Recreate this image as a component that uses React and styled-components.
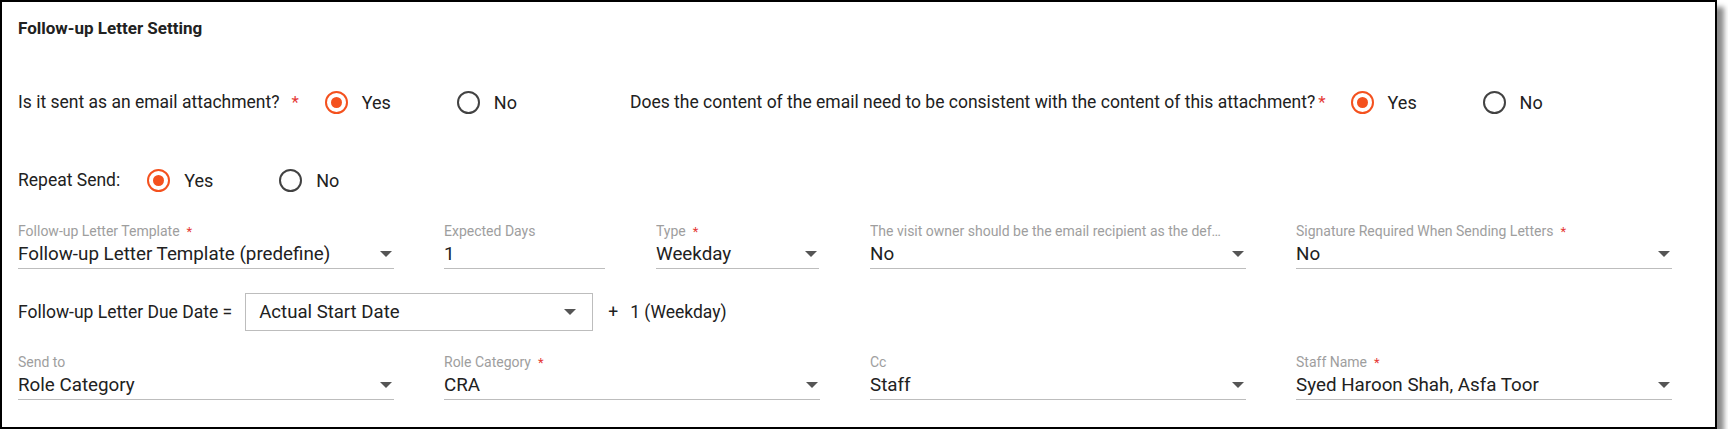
import React from "react";
import styled, { createGlobalStyle } from "styled-components";

const GlobalStyle = createGlobalStyle`
  body {
    margin: 0;
    background: #ffffff;
    font-family: Roboto, "Liberation Sans", sans-serif;
    color: #212121;
  }
`;

const Panel = styled.div`
  width: 1717px;
  height: 429px;
  box-sizing: border-box;
  border: 2px solid #000;
  box-shadow: 7px 7px 5px rgba(0, 0, 0, 0.45);
  padding: 15px 0 0 16px;
  display: flex;
  flex-direction: column;
`;

const Title = styled.h3`
  margin: 0;
  font-size: 17px;
  font-weight: 700;
  line-height: 22px;
  color: #212121;
`;

const RadioRow = styled.div`
  display: flex;
  align-items: center;
  height: 40px;
  margin-top: ${(p) => p.$top}px;
`;

const Question = styled.div`
  display: flex;
  align-items: center;
  width: ${(p) => (p.$width ? `${p.$width}px` : "auto")};
`;

const QuestionText = styled.span`
  font-size: 17.5px;
  color: #212121;
`;

const Star = styled.span`
  color: #e53935;
  margin-left: ${(p) => p.$gap || 4}px;
  font-size: ${(p) => p.$size || 17}px;
`;

const Options = styled.div`
  display: flex;
  align-items: center;
  margin-left: ${(p) => p.$gap}px;
`;

const Option = styled.label`
  display: flex;
  align-items: center;
  gap: 13px;
  width: 132px;
  font-size: 18px;
  color: #212121;
`;

const Circle = styled.span`
  width: 23px;
  height: 23px;
  box-sizing: border-box;
  border-radius: 50%;
  border: 2px solid ${(p) => (p.$checked ? "#f4511e" : "#424242")};
  display: flex;
  align-items: center;
  justify-content: center;
  margin: 1px;
  &::after {
    content: "";
    width: 11px;
    height: 11px;
    border-radius: 50%;
    background: ${(p) => (p.$checked ? "#f4511e" : "transparent")};
  }
`;

const FieldRow = styled.div`
  display: grid;
  grid-template-columns: repeat(4, 376px);
  column-gap: 50px;
  margin-top: ${(p) => p.$top}px;
`;

const Split = styled.div`
  display: grid;
  grid-template-columns: 161px 163px;
  column-gap: 51px;
`;

const Field = styled.div`
  display: flex;
  flex-direction: column;
  border-bottom: 1px solid #bdbdbd;
  min-width: 0;
`;

const FieldLabel = styled.div`
  font-size: 14px;
  line-height: 17px;
  color: #9e9e9e;
  white-space: nowrap;
  overflow: hidden;
  text-overflow: ellipsis;
  padding-right: 24px;
`;

const ValueLine = styled.div`
  display: flex;
  align-items: center;
  justify-content: space-between;
  height: 28px;
  font-size: 18.8px;
  color: #212121;
`;

const Caret = styled.span`
  width: 0;
  height: 0;
  border-left: 6px solid transparent;
  border-right: 6px solid transparent;
  border-top: 6px solid #555;
  margin-right: 2px;
`;

const DueRow = styled.div`
  display: flex;
  align-items: center;
  margin-top: 24px;
  font-size: 17.5px;
  color: #212121;
`;

const Box = styled.div`
  width: 348px;
  height: 38px;
  box-sizing: border-box;
  border: 1px solid #bdbdbd;
  margin-left: 13px;
  padding: 0 14px 0 13px;
  display: flex;
  align-items: center;
  justify-content: space-between;
  font-size: 18.6px;
`;

const Plus = styled.span`
  margin-left: 15px;
  margin-right: 12px;
`;

function Radios({ value, gap }) {
  return (
    <Options $gap={gap}>
      <Option>
        <Circle $checked={value === "Yes"} />
        Yes
      </Option>
      <Option>
        <Circle $checked={value === "No"} />
        No
      </Option>
    </Options>
  );
}

function Select({ label, value, required, caret = true }) {
  return (
    <Field>
      <FieldLabel>
        {label}
        {required && <Star $gap={7} $size={13}>*</Star>}
      </FieldLabel>
      <ValueLine>
        <span>{value}</span>
        {caret && <Caret />}
      </ValueLine>
    </Field>
  );
}

export default function App() {
  return (
    <>
      <GlobalStyle />
      <Panel>
        <Title>Follow-up Letter Setting</Title>

        <RadioRow $top={43}>
          <Question $width={612}>
            <QuestionText>Is it sent as an email attachment?</QuestionText>
            <Star $gap={12}>*</Star>
            <Radios value="Yes" gap={25} />
          </Question>
          <Question>
            <QuestionText>
              Does the content of the email need to be consistent with the content of this attachment?
            </QuestionText>
            <Star $gap={3}>*</Star>
            <Radios value="Yes" gap={24} />
          </Question>
        </RadioRow>

        <RadioRow $top={38}>
          <Question>
            <QuestionText>Repeat Send:</QuestionText>
            <Radios value="Yes" gap={26} />
          </Question>
        </RadioRow>

        <FieldRow $top={23}>
          <Select label="Follow-up Letter Template" value="Follow-up Letter Template (predefine)" required />
          <Split>
            <Select label="Expected Days" value="1" caret={false} />
            <Select label="Type" value="Weekday" required />
          </Split>
          <Select
            label="The visit owner should be the email recipient as the default recipient"
            value="No"
          />
          <Select label="Signature Required When Sending Letters" value="No" required />
        </FieldRow>

        <DueRow>
          <span>Follow-up Letter Due Date =</span>
          <Box>
            <span>Actual Start Date</span>
            <Caret />
          </Box>
          <Plus>+</Plus>
          <span>1 (Weekday)</span>
        </DueRow>

        <FieldRow $top={23}>
          <Select label="Send to" value="Role Category" />
          <Select label="Role Category" value="CRA" required />
          <Select label="Cc" value="Staff" />
          <Select label="Staff Name" value="Syed Haroon Shah, Asfa Toor" required />
        </FieldRow>
      </Panel>
    </>
  );
}
